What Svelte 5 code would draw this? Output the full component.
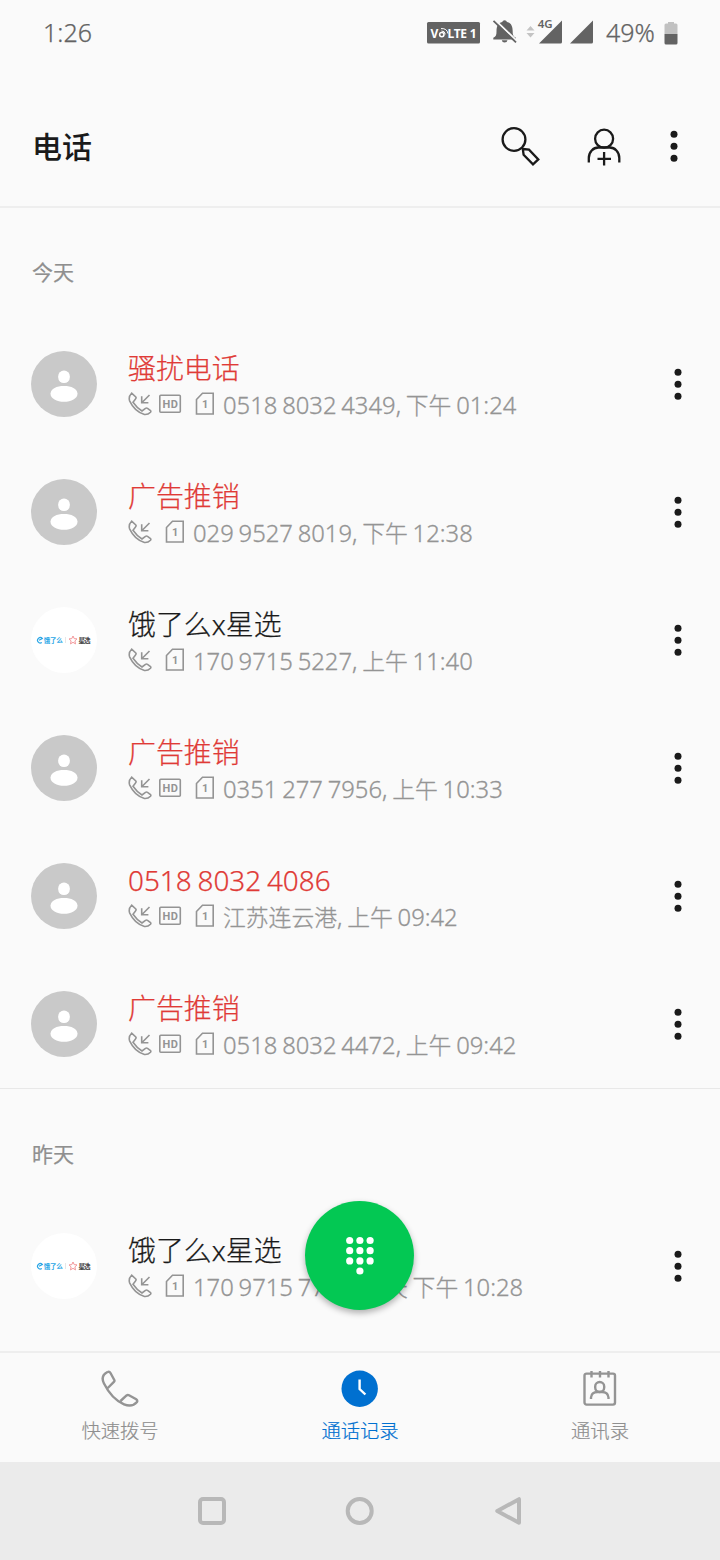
<script lang="ts">
	interface Call {
		name: string;
		spam?: boolean;
		brand?: boolean;
		hd?: boolean;
		detail: string;
	}

	interface Section {
		title: string;
		calls: Call[];
	}

	const sections: Section[] = [
		{
			title: '今天',
			calls: [
				{ name: '骚扰电话', spam: true, hd: true, detail: '0518 8032 4349, 下午 01:24' },
				{ name: '广告推销', spam: true, detail: '029 9527 8019, 下午 12:38' },
				{ name: '饿了么x星选', brand: true, detail: '170 9715 5227, 上午 11:40' },
				{ name: '广告推销', spam: true, hd: true, detail: '0351 277 7956, 上午 10:33' },
				{ name: '0518 8032 4086', spam: true, hd: true, detail: '江苏连云港, 上午 09:42' },
				{ name: '广告推销', spam: true, hd: true, detail: '0518 8032 4472, 上午 09:42' }
			]
		},
		{
			title: '昨天',
			calls: [{ name: '饿了么x星选', brand: true, detail: '170 9715 7728, 昨天 下午 10:28' }]
		}
	];

	// latin and han runs are sized separately
	function runs(text: string) {
		return (text.match(/[\u4e00-\u9fff]+|[^\u4e00-\u9fff]+/g) ?? []).map((t) => ({
			text: t,
			latin: !/[\u4e00-\u9fff]/.test(t)
		}));
	}
</script>

{#snippet dots()}
	<svg class="dots" width="10" height="34" viewBox="0 0 10 34">
		<circle cx="5" cy="5.2" r="3.5" />
		<circle cx="5" cy="17.2" r="3.5" />
		<circle cx="5" cy="29.2" r="3.5" />
	</svg>
{/snippet}

{#snippet label(text: string)}
	{#each runs(text) as run}<span class:latin={run.latin}>{run.text}</span>{/each}
{/snippet}

<div class="screen">
	<div class="status">
		<span class="clock">1:26</span>
		<svg class="status-icons" width="180" height="46" viewBox="424 10 180 46">
			<rect x="427" y="22" width="53" height="21.5" rx="1.5" fill="#636363" />
			<text x="430.5" y="37.5" class="volte">V</text>
			<circle cx="441.8" cy="34.6" r="2.2" fill="none" stroke="#fff" stroke-width="1.5" />
			<path d="M441.500 31q3.300-.2 3.800 3.300M441 28.600q6-.5 7 5" fill="none" stroke="#fff" stroke-width="1" />
			<text x="447.5" y="37.5" class="volte" textLength="29">LTE 1</text>
			<path d="M493.300 39.500v-1.700c2.700-1.300 3.200-3 3.200-6.300c0-5.500 1.700-8.700 5.700-9.500a2.500 2.500 0 0 1 4.800 0c4 .8 5.700 4 5.700 9.500c0 3.300.5 5 3.300 6.300v1.700zM501.800 40.300h5.700q-.4 2.200-2.900 2.200t-2.800-2.200z" fill="#636363" />
			<path d="M494.500 19.500l23 22" stroke="#fafafa" stroke-width="2" />
			<path d="M493.500 20.900l22.500 21.500" stroke="#636363" stroke-width="1.8" />
			<path d="M526.500 30.500l4-4.500 4 4.500zM526.500 33l4 4.500 4-4.500z" fill="#c4c4c4" />
			<path d="M539 43.500L562 20.500v21.500q0 1.500-1.500 1.500zM570 43.500L593 20.500v21.500q0 1.500-1.500 1.500z" fill="#636363" />
			<path d="M537 18h15.500v9.500l-2 2h-13.500z" fill="#fafafa" />
			<text x="537.800" y="28.400" class="gen">4G</text>
		</svg>
		<span class="percent">49%</span>
		<svg width="14" height="24" viewBox="0 0 14 24">
			<path d="M.5 13V4q0-1.500 1.500-1.500h2V1h6v1.500h2q1.500 0 1.500 1.500v9z" fill="#c1c1c1" />
			<path d="M.5 13h13v9q0 1.500-1.500 1.500H2q-1.500 0-1.500-1.500z" fill="#636363" />
		</svg>
	</div>

	<header class="header">
		<h1>电话</h1>
		<svg class="search" width="40" height="40" viewBox="0 0 40 40">
			<circle cx="14" cy="13.500" r="11.400" />
			<path d="M22.800 23l6.200.6 9.300 9.800-5.300 4.900-9.400-9.600z" />
		</svg>
		<svg class="add" width="40" height="40" viewBox="0 0 40 40">
			<circle cx="20.100" cy="12.700" r="9" />
			<path d="M4.800 36.500v-4.500c0-6.200 4.600-10.500 9.500-10.500h11.500c5 0 9.500 4.300 9.500 10.500v4.500M20.100 26v13.500M13.500 32.800h13.500" />
		</svg>
		{@render dots()}
	</header>

	<main class="list">
		{#each sections as section}
			<section>
				<h2>{section.title}</h2>
				{#each section.calls as call}
					<div class="row">
						{#if call.brand}
							<div class="avatar brand">
								<svg width="56" height="12" viewBox="0 0 56 12">
									<path d="M5.800 8.500A2.700 2.700 0 1 1 6.300 4.500L3 6.300" fill="none" stroke="#2aa6e6" stroke-width="1.200" />
									<text x="7.800" y="8.700" textLength="19" class="logo" fill="#2aa6e6">饿了么</text>
									<path d="M29.500 3v6" stroke="#ddd" stroke-width=".7" />
									<path d="M37 2l1.200 2.600 2.800.3-2.100 2 .6 3L37 8.300 34.500 9.900l.6-3-2.100-2 2.800-.3z" fill="none" stroke="#f3989b" />
									<text x="42.500" y="8.700" textLength="12" class="logo" fill="#444">星选</text>
								</svg>
							</div>
						{:else}
							<div class="avatar">
								<svg width="66" height="66" viewBox="0 0 66 66" fill="#fff">
									<rect x="27.200" y="19.500" width="11.600" height="12.600" rx="5.700" />
									<path d="M19.500 42.500c.5-5 6-7.500 13.500-7.500s13 2.500 13.500 7.500c.3 5-6.500 8.300-13.500 8.300s-13.800-3.300-13.500-8.300z" />
								</svg>
							</div>
						{/if}
						<div class="info">
							<div class="name" class:spam={call.spam}>{@render label(call.name)}</div>
							<div class="detail">
								<svg width="24" height="24" viewBox="0 0 24 24">
									<path d="M3.600 1.200L7.800 5Q8.500 6 7.500 7L5 10.200Q9 16 14 19l3.500-2.700q1-.7 2 0l3 2.200q.7.800 0 1.700Q20 22.800 16.500 22.500C10 20.500 4.500 15 1.600 8.800Q.3 4.500 3.600 1.200z" />
									<path d="M21.500 3l-7.500 7.500M13.700 4.300v6.500h6.700" />
								</svg>
								{#if call.hd}
									<svg class="hd" width="24" height="24" viewBox="0 0 24 24">
										<rect x="1.800" y="3.200" width="20.500" height="17" rx="1" />
										<text x="4.500 12.700" y="15.700">HD</text>
									</svg>
								{/if}
								<svg class="sim" width="20" height="24" viewBox="0 0 20 24">
									<path d="M7.500 1.200H18.200V22H1.500V7.500z" />
									<text x="7" y="15.800">1</text>
								</svg>
								<span class="text">{@render label(call.detail)}</span>
							</div>
						</div>
						{@render dots()}
					</div>
				{/each}
			</section>
		{/each}
	</main>

	<button class="fab" aria-label="拨号键盘">
		<svg width="30" height="40" viewBox="0 0 30 40" fill="#fff">
			{#each [0, 1, 2] as r}
				{#each [0, 1, 2] as c}
					<circle cx={4.7 + c * 10.2} cy={4.5 + r * 10.2} r="3.600" />
				{/each}
			{/each}
			<circle cx="14.900" cy="35" r="3.600" />
		</svg>
	</button>

	<nav class="tabs">
		<div class="tab">
			<svg width="40" height="40" viewBox="0 0 40 40">
				<path d="M7.500 3Q9.500 2.200 10.500 4L14.300 11Q14.800 12 13.900 12.900L7.800 19M7.500 3C1.500 6 2 10.500 4 14.500C9 24.500 15 31.500 24 35.300C29.500 37.500 33.500 37 37 33Q37.800 31.500 36.200 30.300L29 26.300Q27.800 25.600 26.500 26.400L20.500 32" />
			</svg>
			<span>快速拨号</span>
		</div>
		<div class="tab active">
			<svg width="40" height="40" viewBox="0 0 40 40">
				<circle cx="19.700" cy="19.700" r="18.200" fill="#0070d0" stroke="none" />
				<path d="M19.600 10.500v9.500l5.800 5.500" stroke="#fff" />
			</svg>
			<span>通话记录</span>
		</div>
		<div class="tab">
			<svg width="40" height="40" viewBox="0 0 40 40">
				<rect x="4.500" y="4.600" width="30.500" height="31" rx="2" />
				<path d="M11.500 2v6.500M20 2v6.500M28.500 2v6.500M11 30v-1.500q.5-5.500 6.500-5.500h4.500q6 0 6.500 5.500v1.500" />
				<rect x="15.200" y="13" width="9" height="10" rx="4.500" />
			</svg>
			<span>通讯录</span>
		</div>
	</nav>

	<div class="system">
		<svg width="30" height="30" viewBox="0 0 30 30"><rect x="3" y="3" width="24" height="24" rx="3" /></svg>
		<svg width="30" height="30" viewBox="0 0 30 30"><circle cx="14.700" cy="15" r="12" /></svg>
		<svg width="30" height="30" viewBox="0 0 30 30"><path d="M26 3.200v23.600L4.300 15z" /></svg>
	</div>
</div>

<style>
	:global(body) {
		background: #fafafa;
	}

	.screen {
		position: relative;
		display: flex;
		flex-direction: column;
		width: 720px;
		height: 1560px;
		overflow: hidden;
		background: #fafafa;
		color: #1a1a1a;
		font-family: 'Noto Sans', 'Noto Sans CJK SC', sans-serif;
		font-weight: 300;
	}

	svg {
		display: block;
		flex: none;
	}

	.status {
		display: flex;
		align-items: center;
		box-sizing: border-box;
		height: 66px;
		padding: 0 42px 0 43px;
		color: #636363;
		font-size: 25px;
		-webkit-text-stroke: 0.25px;
	}

	.status svg {
		-webkit-text-stroke: 0;
	}

	.clock {
		flex: 1;
		padding-bottom: 2px;
	}

	.percent {
		width: 50px;
		margin: 0 8px 0 2px;
		padding-bottom: 2px;
		white-space: nowrap;
	}

	.volte {
		font-size: 12px;
		font-weight: 700;
		fill: #fff;
	}

	.gen {
		font-size: 11.5px;
		font-weight: 600;
		fill: #636363;
	}

	.header {
		display: flex;
		align-items: center;
		box-sizing: border-box;
		height: 142px;
		padding: 20px 41px 0 32px;
		border-bottom: 2px solid #eee;
	}

	h1 {
		flex: 1;
		margin: 0;
		padding-bottom: 2px;
		font-family: 'Noto Sans CJK SC', sans-serif;
		font-size: 30px;
		line-height: 40px;
		font-weight: 500;
	}

	.search,
	.add {
		margin-right: 44px;
		fill: none;
		stroke: #1a1a1a;
		stroke-width: 2.3;
	}

	.add {
		margin-right: 45px;
	}

	.dots {
		fill: #1a1a1a;
	}

	.list {
		height: 1143px;
		overflow: hidden;
	}

	section + section {
		border-top: 1px solid #e8e8e8;
	}

	h2 {
		height: 112px;
		margin: 0;
		padding: 0 32px;
		color: #8f8f8f;
		font-family: 'Noto Sans CJK SC', sans-serif;
		font-size: 21px;
		line-height: 127px;
		font-weight: 400;
		-webkit-text-stroke: 0.2px;
	}

	section + section h2 {
		height: 113px;
		line-height: 129px;
	}

	.row {
		display: flex;
		align-items: center;
		box-sizing: border-box;
		height: 128px;
		padding: 0 37px 0 31px;
	}

	.avatar {
		display: flex;
		align-items: center;
		justify-content: center;
		width: 66px;
		height: 66px;
		border-radius: 50%;
		background: #c9c9c9;
	}

	.brand {
		background: #fff;
	}

	.logo {
		font-size: 6.5px;
		font-weight: 700;
	}

	.info {
		flex: 1;
		height: 72px;
		padding: 4px 0 0 31px;
	}

	.name {
		height: 37px;
		font-size: 27.9px;
		line-height: 36px;
		white-space: nowrap;
		word-spacing: -1.5px;
		-webkit-text-stroke: 0.25px;
	}

	.spam {
		color: #e03a36;
	}

	.detail {
		display: flex;
		height: 36px;
		align-items: center;
		color: #949494;
		font-size: 22.8px;
		line-height: 36px;
		white-space: nowrap;
	}

	.detail svg {
		margin-bottom: 2px;
		fill: none;
		stroke: #949494;
		stroke-width: 1.6;
	}

	.detail svg text {
		fill: #949494;
		stroke: none;
		font-family: Roboto, sans-serif;
		font-size: 11px;
		font-weight: 700;
	}

	.detail .hd {
		margin-left: 6px;
	}

	.detail .sim {
		margin: 0 8px 2px 13px;
	}

	.text {
		white-space: pre;
		word-spacing: -1.4px;
		-webkit-text-stroke: 0.3px;
	}

	.detail .latin {
		font-size: 23.8px;
	}

	.fab {
		position: absolute;
		left: 305px;
		top: 1201px;
		display: flex;
		align-items: center;
		justify-content: center;
		width: 109px;
		height: 109px;
		padding: 0;
		border: none;
		border-radius: 50%;
		background: #03c853;
		box-shadow: 0 3px 6px rgba(0, 0, 0, 0.3);
	}

	.tabs {
		display: flex;
		box-sizing: border-box;
		height: 111px;
		border-top: 2px solid #eee;
	}

	.tab {
		display: flex;
		flex: 1;
		flex-direction: column;
		align-items: center;
		padding-top: 16px;
		color: #8f8f8f;
		font-size: 19.3px;
		line-height: 28px;
		-webkit-text-stroke: 0.2px;
	}

	.tab svg {
		margin-bottom: 8px;
		fill: none;
		stroke: #949494;
		stroke-width: 2.4;
	}

	.active {
		color: #0070d0;
	}

	.system {
		display: flex;
		flex: 1;
		align-items: center;
		justify-content: center;
		gap: 118px;
		background: #ebebeb;
	}

	.system svg {
		fill: none;
		stroke: #b8b8b8;
		stroke-width: 4;
		stroke-linejoin: round;
	}
</style>
